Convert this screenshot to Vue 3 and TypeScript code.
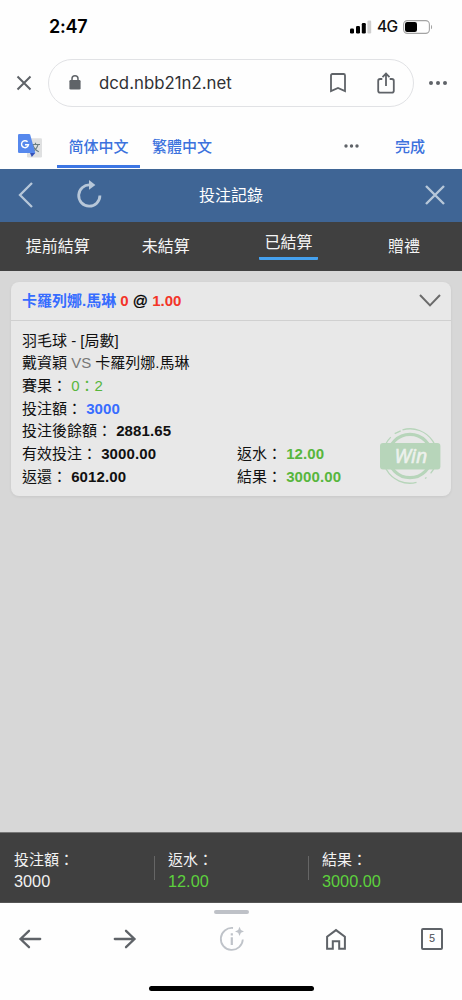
<script setup lang="ts">
interface Tab { label: string; active?: boolean }
interface Total { label: string; value: string; positive?: boolean }

const tabs: Tab[] = [
  { label: '提前結算' },
  { label: '未結算' },
  { label: '已結算', active: true },
  { label: '贈禮' },
]

const totals: Total[] = [
  { label: '投注額：', value: '3000' },
  { label: '返水：', value: '12.00', positive: true },
  { label: '結果：', value: '3000.00', positive: true },
]
</script>

<template>
  <div class="phone">
    <header class="status">
      <span class="time">2:47</span>
      <div class="status-right">
        <svg width="22" height="14" viewBox="0 0 22 14">
          <rect x="0" y="8.5" width="4" height="5" rx="1.2" />
          <rect x="6" y="6" width="4" height="7.5" rx="1.2" />
          <rect x="11.8" y="3" width="4" height="10.5" rx="1.2" />
          <rect x="17.4" y="0.5" width="3.8" height="13" rx="1.2" fill="#cfcfcf" />
        </svg>
        <span class="network">4G</span>
        <svg width="30" height="14" viewBox="0 0 30 14">
          <rect x="0.6" y="0.6" width="25.8" height="12.8" rx="3.8" fill="none" stroke="#a3a3a3" stroke-width="1.1" />
          <rect x="2" y="2" width="12" height="10" rx="2.2" />
          <path d="M28 4.7c1.5.7 1.5 3.9 0 4.6z" fill="#a3a3a3" />
        </svg>
      </div>
    </header>

    <div class="address">
      <svg class="stop" width="16" height="16" viewBox="0 0 16 16"><path d="M1.5 1.5l13 13M14.5 1.5l-13 13" stroke="#5f6368" stroke-width="2" /></svg>
      <div class="pill">
        <svg class="lock" width="12" height="15" viewBox="0 0 12 15">
          <rect x="0.4" y="5" width="11.2" height="9.6" rx="1.3" fill="#5f6368" />
          <path d="M3 5.5V3.8a3 3 0 0 1 6 0v1.7" fill="none" stroke="#5f6368" stroke-width="1.5" />
        </svg>
        <span class="url">dcd.nbb21n2.net</span>
        <svg class="bookmark" width="16" height="20" viewBox="0 0 16 20"><path d="M1 18.1V2.4Q1 1 2.4 1h11.2Q15 1 15 2.4v15.7l-7-3.2z" fill="none" stroke="#5f6368" stroke-width="1.8" /></svg>
        <svg class="share" width="18" height="22" viewBox="0 0 18 22">
          <path d="M5.3 7H3.1Q1.2 7 1.2 8.9v9.9q0 1.9 1.9 1.9h11.8q1.9 0 1.9-1.9V8.9Q16.8 7 14.9 7h-2.2M9 14V1.8M5.5 5.1L9 1.6l3.5 3.5" fill="none" stroke="#5f6368" stroke-width="1.8" />
        </svg>
      </div>
      <svg class="more" width="18" height="4" viewBox="0 0 18 4" fill="#5f6368"><circle cx="2" cy="2" r="2" /><circle cx="9" cy="2" r="2" /><circle cx="16" cy="2" r="2" /></svg>
    </div>

    <div class="translate">
      <svg class="gt" width="24" height="24" viewBox="0 0 24 24">
        <rect x="9" y="4.2" width="15" height="19.3" rx="1.3" fill="#dfe0e1" />
        <g fill="none" stroke="#6c7f83" stroke-width="1.2"><path d="M13 10.5h9M17.5 8.7v1.8M20 10.7c-.8 3.1-3 5.8-6 7.3M14.8 11c.9 3 3.2 5.4 6 6.8" /></g>
        <path d="M12 19h5.2L13.8 23z" fill="#3451b8" />
        <path d="M1.3 0h9.8q.8 0 1.1.8L17.3 19.1H1.3Q0 19.1 0 17.8V1.3Q0 0 1.3 0z" fill="#5688ed" />
        <path d="M9.6 7.8A3.5 3.5 0 1 0 10.5 10.7H7" fill="none" stroke="#fff" stroke-width="1.4" />
      </svg>
      <span class="lang current">简体中文</span>
      <span class="lang other">繁體中文</span>
      <svg class="lang-more" width="15" height="4" viewBox="0 0 15 4" fill="#5f6368"><circle cx="2" cy="2" r="1.7" /><circle cx="7.5" cy="2" r="1.7" /><circle cx="13" cy="2" r="1.7" /></svg>
      <span class="done">完成</span>
    </div>

    <nav class="titlebar">
      <svg class="back" width="16" height="26" viewBox="0 0 16 26"><path d="M14 1L2 13l12 12" fill="none" stroke="#b7c7d9" stroke-width="2.3" /></svg>
      <svg class="reload" width="25" height="28" viewBox="0 0 25 28">
        <path d="M13.3 5A10.6 10.6 0 1 0 22.9 15.5" fill="none" stroke="#b7c7d9" stroke-width="2.8" />
        <path d="M12 0l6.4 5-6.4 4.7z" fill="#b7c7d9" />
      </svg>
      <h1>投注記錄</h1>
      <svg class="close" width="20" height="20" viewBox="0 0 20 20"><path d="M1 1l18 18M19 1L1 19" stroke="#b7c7d9" stroke-width="2.4" /></svg>
    </nav>

    <div class="tabs">
      <div v-for="tab in tabs" :key="tab.label" class="tab" :class="{ active: tab.active }"><span>{{ tab.label }}</span></div>
    </div>

    <main>
      <section class="card">
        <div class="card-head">
          <div><b class="blue">卡羅列娜.馬琳</b> <b class="red">0</b> <span class="at">@</span> <b class="red">1.00</b></div>
          <svg width="22" height="13" viewBox="0 0 22 13"><path d="M1 1l10 10.4L21 1" fill="none" stroke="#6b6b6b" stroke-width="2" /></svg>
        </div>
        <div class="card-body">
          <p>羽毛球 - [局數]</p>
          <p>戴資穎 <span class="vs">VS</span> 卡羅列娜.馬琳</p>
          <p>賽果： <span class="green">0：2</span></p>
          <p>投注額： <b class="blue">3000</b></p>
          <p>投注後餘額： <b>2881.65</b></p>
          <div class="pair"><p>有效投注： <b>3000.00</b></p><p>返水： <b class="green">12.00</b></p></div>
          <div class="pair"><p>返還： <b>6012.00</b></p><p>結果： <b class="green">3000.00</b></p></div>
          <svg class="stamp" width="62" height="56" viewBox="0 0 62 56">
            <g fill="none" stroke="#b7d5ba">
              <circle cx="31" cy="28" r="21.6" stroke-width="3.2" />
              <path d="M23.5 1.9A27 27 0 0 1 51.6 45.4M47.5 49.4l-1.5 1.1M37.5 54.4A27 27 0 0 1 11.8 9.1M15.7 5.7l6-2.9" stroke-width="1.3" />
            </g>
            <rect x="1" y="15" width="60.4" height="26.4" rx="3" fill="#b7d5ba" />
            <text x="31.8" y="35" text-anchor="middle">Win</text>
          </svg>
        </div>
      </section>
    </main>

    <div class="totals">
      <div v-for="total in totals" :key="total.label" class="total">
        <span>{{ total.label }}</span>
        <span class="amount" :class="{ positive: total.positive }">{{ total.value }}</span>
      </div>
    </div>

    <footer>
      <div class="grabber"></div>
      <div class="toolbar">
        <svg width="24" height="20" viewBox="0 0 24 20"><path d="M11 1.8L2.5 10l8.5 8.2M3 10h19.2" fill="none" stroke="#5f6368" stroke-width="2.3" stroke-linecap="round" /></svg>
        <svg width="24" height="20" viewBox="0 0 24 20"><path d="M13 1.8l8.5 8.2-8.5 8.2M21 10H1.8" fill="none" stroke="#5f6368" stroke-width="2.3" stroke-linecap="round" /></svg>
        <svg width="26" height="26" viewBox="0 0 26 26">
          <path d="M14 2A11 11 0 1 0 23.8 13.5" fill="none" stroke="#bfc3c9" stroke-width="1.8" />
          <path d="M20.5.8l1.4 3.2L25 5.4l-3.1 1.3-1.4 3.2-1.3-3.2L16 5.4 19.2 4z" fill="#bfc3c9" />
          <path d="M12.8 11.3v7.6M12.8 7.3v2.2" fill="none" stroke="#bfc3c9" stroke-width="2.2" />
        </svg>
        <svg width="20" height="22" viewBox="0 0 20 22"><path d="M1.1 20.8V8.7L10 2.1l8.9 6.6v12.1h-5.7v-7.5H6.8v7.5z" fill="none" stroke="#5f6368" stroke-width="2" /></svg>
        <div class="count">5</div>
      </div>
      <div class="home-bar"></div>
    </footer>
  </div>
</template>

<style>
body { margin: 0; background: #fefefe; }
</style>

<style scoped>
* { box-sizing: border-box; }
.phone {
  width: 462px;
  height: 1000px;
  display: flex;
  flex-direction: column;
  overflow: hidden;
  background: #fefefe;
  color: #111;
  font-family: "Liberation Sans", "Noto Sans CJK TC", sans-serif;
}
svg { display: block; flex: none; }
p, h1 { margin: 0; }

.status { height: 54px; padding: 0 29px 0 49px; display: flex; justify-content: space-between; align-items: center; }
.time { font: 600 18px/22px Inter, sans-serif; letter-spacing: -.2px; color: #000; }
.status-right { display: flex; align-items: center; }
.status-right svg { margin-top: -1px; }
.network { font: 500 15.5px/20px Inter, sans-serif; margin: 0 6px 0 5px; width: 20px; white-space: nowrap; letter-spacing: -.6px; }

.address { height: 58px; padding-top: 5px; display: flex; align-items: flex-start; }
.stop { margin: 16px 0 0 15.5px; }
.pill { width: 366.5px; height: 48px; margin-left: 16px; border: 1.5px solid #e1e2e5; border-radius: 24px; display: flex; align-items: center; }
.lock { margin-left: 20.5px; margin-top: -1px; }
.url { margin-left: 18px; width: 231px; font: 400 16.8px/24px Inter, sans-serif; color: #303134; }
.share { margin-left: 30.5px; }
.more { margin: 22px 0 0 15px; }

.translate { height: 56.5px; display: flex; align-items: flex-start; color: #3c72dd; font: 500 15px/22px "Noto Sans CJK SC", sans-serif; }
.gt { margin: 22px 0 0 18px; }
.lang { height: 56px; padding-top: 22.5px; }
.current { width: 83px; margin-left: 15px; text-align: center; border-bottom: 3px solid #3d76e4; }
.other { width: 60px; margin-left: 12px; font-family: "Noto Sans CJK TC", sans-serif; }
.lang-more { margin: 32px 0 0 132px; }
.done { margin: 22.5px 0 0 36px; }

.titlebar { height: 53.5px; background: #3f6595; display: grid; grid-template-columns: 56px 69px 212px 1fr; align-items: center; color: #fff; }
.back { margin-left: 18px; }
.reload { margin-left: 20.5px; margin-top: -3px; }
.titlebar h1 { padding-top: 1px; font-size: 16px; font-weight: 400; line-height: 24px; text-align: center; }
.close { margin-left: 88px; }

.tabs { height: 49px; background: #404040; display: grid; grid-template-columns: 115.5px 100.5px 145px 86px; justify-content: start; color: #f5f5f5; font-size: 16px; line-height: 24px; text-align: center; }
.tab { padding-top: 13.4px; }
.active { padding-top: 9.4px; }
.active span { display: inline-block; width: 59px; height: 29px; border-bottom: 3px solid #45a1ef; border-radius: 1px; }

main { flex: 1; background: #d7d7d7; padding: 10.5px 11px 0; }
.card { height: 214.5px; border-radius: 8px; background: #e8e8e8; box-shadow: 0 1px 3px rgba(0, 0, 0, .07); font-size: 15px; }
.card-head { height: 39px; padding: 0 10.5px 0 11px; display: flex; justify-content: space-between; align-items: center; border-bottom: 1.5px solid #d0d0d0; line-height: 22px; }
.at { color: #000; font-weight: 500; -webkit-text-stroke: .3px #000; }
.blue { color: #376dff; }
.red { color: #f33428; }
.green { color: #57b63d; }
.vs { color: #777; }
.card-body { position: relative; padding: 9.1px 11px 0; line-height: 22.7px; }
.card-body p { height: 22.7px; white-space: nowrap; }
.card-body b { letter-spacing: .1px; }
.pair { display: grid; grid-template-columns: 215px 1fr; }
.stamp { position: absolute; right: 10px; top: 107.5px; }
.stamp text { font: italic 500 19.5px "Open Sans", "Noto Sans", sans-serif; fill: #edf1ed; stroke: #edf1ed; stroke-width: .6px; }

.totals { height: 71px; background: #404040; border-top: 1px solid #777; border-bottom: 1px solid #555; display: grid; grid-template-columns: repeat(3, 154px); color: #f2f2f2; font-size: 15px; }
.total { padding: 16px 0 0 14px; display: flex; flex-direction: column; line-height: 22px; }
.total + .total { background: linear-gradient(#666, #666) left 23px / 1px 24px no-repeat; }
.amount { font-size: 16.3px; line-height: 21px; }
.positive { color: #5dd13d; }

footer { height: 97px; display: flex; flex-direction: column; align-items: center; background: #fefefe; }
.grabber { width: 35px; height: 4px; margin-top: 6.5px; border-radius: 2px; background: #bec1c7; }
.toolbar { width: 462px; height: 52px; padding-left: 18px; display: grid; grid-template-columns: 95px 106px 107px 95px 22px; align-items: center; }
.toolbar > * { margin-top: -1px; }
.count { width: 22px; height: 22px; border: 2px solid #5f6368; border-radius: 2px; font: 500 10.5px/18px Inter, sans-serif; text-align: center; color: #5f6368; }
.home-bar { width: 165px; height: 5px; margin-top: 20.5px; border-radius: 3px; background: #000; }
</style>
